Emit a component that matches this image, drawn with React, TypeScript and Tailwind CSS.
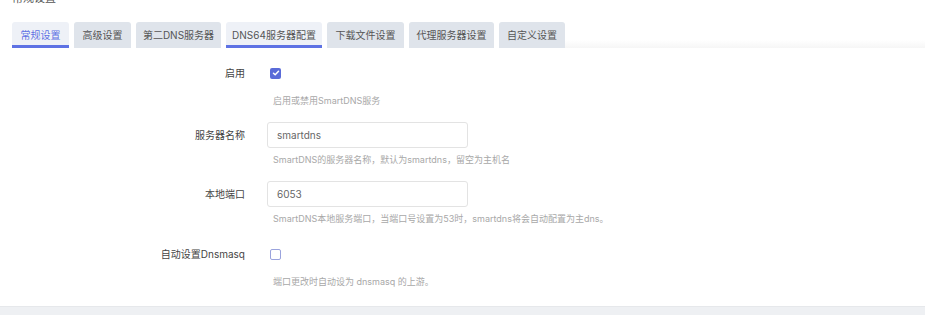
const tabs = [
  { name: "常规设置", state: "active", w: "w-[57px]" },
  { name: "高级设置", state: "", w: "w-[57px]" },
  { name: "第二DNS服务器", state: "", w: "w-[85px]" },
  { name: "DNS64服务器配置", state: "hover", w: "w-[96px]" },
  { name: "下载文件设置", state: "", w: "w-[77px]" },
  { name: "代理服务器设置", state: "", w: "w-[85px]" },
  { name: "自定义设置", state: "", w: "w-[66px]" },
]

function Tab({ name, state, w }: { name: string; state: string; w: string }) {
  if (state === "active") {
    return (
      <div className={`${w} h-[26px] flex items-center justify-center rounded-t-[3px] bg-[#eef1f7] text-[#5e72e4] border-b-[3px] border-[#5e72e4] pt-[3px]`}>
        {name}
      </div>
    )
  }
  if (state === "hover") {
    return (
      <div className={`${w} h-[26px] flex items-center justify-center rounded-t-[3px] bg-[#eef1f7] text-[#555] border-b-[3px] border-[#5e72e4] pt-[3px]`}>
        {name}
      </div>
    )
  }
  return (
    <div className={`${w} h-[26px] flex items-center justify-center rounded-t-[3px] bg-[#dfe4eb] text-[#555]`}>
      {name}
    </div>
  )
}

function Checkbox({ checked }: { checked: boolean }) {
  if (checked) {
    return (
      <div className="w-[11px] h-[11px] rounded-[2px] bg-[#5a6bd8] flex items-center justify-center">
        <svg width="8" height="8" viewBox="0 0 8 8" fill="none">
          <path d="M1.5 4.2 L3.2 5.8 L6.5 2.3" stroke="white" strokeWidth="1.5" strokeLinecap="round" strokeLinejoin="round" />
        </svg>
      </div>
    )
  }
  return <div className="w-[11px] h-[11px] rounded-[2px] border border-[#9aa3dd] bg-white" />
}

function Row({
  label,
  desc,
  children,
  kind,
}: {
  label: string
  desc: string
  children: React.ReactNode
  kind: "check" | "input"
}) {
  const h = kind === "check" ? "h-[28px]" : "h-[26px]"
  return (
    <div className="flex">
      <div className={`w-[245px] ${h} flex items-center justify-end text-[10px] text-[#444]`}>{label}</div>
      <div className="flex flex-col ml-[22px]">
        <div className={`${h} flex items-center ${kind === "check" ? "pl-[3px]" : ""}`}>{children}</div>
        <div className={`${kind === "check" ? "mt-[8px] pl-[6px]" : "mt-[6px] pl-[6px]"} text-[9px] leading-[12px] text-[#a8a8a8]`}>
          {desc}
        </div>
      </div>
    </div>
  )
}

function Input({ value }: { value: string }) {
  return (
    <div className="w-[201px] h-[26px] border border-[#e3e3e3] rounded-[3px] bg-white flex items-center px-[9px] text-[10px] text-[#666]">
      {value}
    </div>
  )
}

export default function App() {
  return (
    <div
      className="w-[925px] h-[315px] bg-white flex flex-col overflow-hidden"
      style={{ fontFamily: "Inter, 'Noto Sans CJK SC', sans-serif" }}
    >
      {/* heading, scrolled mostly out of view */}
      <div className="h-[5px] overflow-hidden pl-[12px]">
        <div className="-mt-[9px] text-[11px] leading-[14px] text-[#555]">常规设置</div>
      </div>

      {/* tabs */}
      <div className="flex mt-[17px] pl-[12px] text-[10px]">
        <div className="flex gap-[5px]">
          {tabs.map((t) => (
            <Tab key={t.name} name={t.name} state={t.state} w={t.w} />
          ))}
        </div>
        <div className="flex-1 flex flex-col">
          <div className="flex-1" />
          <div className="h-[8px] bg-gradient-to-b from-white to-[#f6f6f6]" />
        </div>
      </div>

      {/* form */}
      <div className="flex-1 flex flex-col pt-[11px] gap-[15px]">
        <Row label="启用" desc="启用或禁用SmartDNS服务" kind="check">
          <Checkbox checked />
        </Row>
        <Row label="服务器名称" desc="SmartDNS的服务器名称，默认为smartdns，留空为主机名" kind="input">
          <Input value="smartdns" />
        </Row>
        <Row label="本地端口" desc="SmartDNS本地服务端口，当端口号设置为53时，smartdns将会自动配置为主dns。" kind="input">
          <Input value="6053" />
        </Row>
        <Row label="自动设置Dnsmasq" desc="端口更改时自动设为 dnsmasq 的上游。" kind="check">
          <Checkbox checked={false} />
        </Row>
      </div>

      <div className="h-[9px] bg-[#eef0f3] border-t border-[#e6e8eb]" />
    </div>
  )
}
